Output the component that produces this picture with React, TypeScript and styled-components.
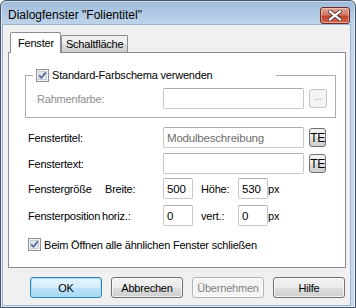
import styled, { createGlobalStyle } from 'styled-components';

const GlobalStyle = createGlobalStyle`
  html, body {
    margin: 0;
    padding: 0;
    background: #ffffff;
  }
  body {
    font-family: "Liberation Sans", Arial, sans-serif;
    font-size: 11px;
    letter-spacing: -0.2px;
    color: #000;
  }
`;

const CheckBox = () => (
  <CheckBoxBox>
    <svg width="13" height="13" viewBox="0 0 13 13">
      <rect x="0.5" y="0.5" width="12" height="12" fill="#f4f4f4" stroke="#8e8f8f" />
      <rect x="2.5" y="2.5" width="8" height="8" fill="#e4e7ec" stroke="#c6cbd3" />
      <path d="M3.2 6.4 L5.4 8.8 L9.8 3.4" fill="none" stroke="#55679a" strokeWidth="1.7" />
    </svg>
  </CheckBoxBox>
);

const CloseGlyph = () => (
  <svg width="14" height="11" viewBox="0 0 14 11">
    <path d="M2 1.5 L12 9.5 M12 1.5 L2 9.5" stroke="#5a3a3a" strokeWidth="4" strokeLinecap="square" />
    <path d="M2 1.5 L12 9.5 M12 1.5 L2 9.5" stroke="#ffffff" strokeWidth="2.2" strokeLinecap="square" />
  </svg>
);

const App = () => {
  return (
    <>
      <GlobalStyle />
      <Window>
        <TitleBar>
          <Title>Dialogfenster "Folientitel"</Title>
          <CloseButton>
            <CloseGlyph />
          </CloseButton>
        </TitleBar>
        <Client>
          <TabStrip>
            <Tab $active>Fenster</Tab>
            <Tab>Schaltfläche</Tab>
          </TabStrip>
          <Panel>
            <GroupBox>
              <GroupLegend>
                <CheckBox />
                <span>Standard-Farbschema verwenden</span>
              </GroupLegend>
              <Row $pl={11}>
                <Label $w={126} $disabled>Rahmenfarbe:</Label>
                <TextBox $w={141} />
                <SmallButton $disabled>...</SmallButton>
              </Row>
            </GroupBox>

            <Row $pl={19} $mt={9}>
              <Label $w={135}>Fenstertitel:</Label>
              <TextBox $w={141} $muted>Modulbeschreibung</TextBox>
              <SmallButton>TE</SmallButton>
            </Row>
            <Row $pl={19} $mt={5}>
              <Label $w={135}>Fenstertext:</Label>
              <TextBox $w={141} />
              <SmallButton>TE</SmallButton>
            </Row>
            <Row $pl={19} $mt={4}>
              <Label $w={77}>Fenstergröße</Label>
              <Label $w={58}>Breite:</Label>
              <TextBox $w={30}>500</TextBox>
              <Label $w={37} $ml={8}>Höhe:</Label>
              <TextBox $w={30}>530</TextBox>
              <Label>px</Label>
            </Row>
            <Row $pl={19} $mt={6}>
              <Label $w={74}>Fensterposition</Label>
              <Label $w={61}>horiz.:</Label>
              <TextBox $w={30}>0</TextBox>
              <Label $w={37} $ml={8}>vert.:</Label>
              <TextBox $w={30}>0</TextBox>
              <Label>px</Label>
            </Row>
            <CheckRow>
              <CheckBox />
              <span>Beim Öffnen alle ähnlichen Fenster schließen</span>
            </CheckRow>
          </Panel>
          <ButtonBar>
            <DialogButton $default>OK</DialogButton>
            <DialogButton>Abbrechen</DialogButton>
            <DialogButton $disabled>Übernehmen</DialogButton>
            <DialogButton>Hilfe</DialogButton>
          </ButtonBar>
        </Client>
      </Window>
    </>
  );
};

export default App;

const Window = styled.div`
  box-sizing: border-box;
  width: 356px;
  height: 308px;
  display: flex;
  flex-direction: column;
  border: 1px solid #46566a;
  border-radius: 6px 6px 0 0;
  background: linear-gradient(to bottom, #9fbbd9 0px, #bfd5ec 24px, #c4d9ef 60px, #c4d9ef 100%);
  box-shadow: inset 0 0 0 1px rgba(255, 255, 255, 0.45);
  overflow: hidden;
`;

const TitleBar = styled.div`
  height: 24px;
  flex-shrink: 0;
  display: flex;
  align-items: center;
  justify-content: space-between;
  padding: 0 5px 0 7px;
`;

const Title = styled.div`
  font-size: 12px;
  letter-spacing: 0;
  color: #000;
  margin-top: 3px;
`;

const CloseButton = styled.div`
  box-sizing: border-box;
  width: 30px;
  height: 17px;
  margin-top: 5px;
  display: flex;
  align-items: center;
  justify-content: center;
  border: 1px solid #6a2a2a;
  border-radius: 3px;
  background: linear-gradient(to bottom, #e2a394 0%, #d07a66 45%, #c0432c 55%, #cf6a4e 100%);
  box-shadow: inset 0 0 0 1px rgba(255, 220, 210, 0.5);
`;

const Client = styled.div`
  flex: 1;
  margin: 0 5px 2px 2px;
  background: #f0f0f0;
  display: flex;
  flex-direction: column;
  box-shadow: 0 0 0 1px rgba(120, 140, 165, 0.45);
`;

const TabStrip = styled.div`
  display: flex;
  align-items: flex-end;
  height: 20px;
  margin: 7px 4px 0 7px;
`;

const Tab = styled.div<{ $active?: boolean }>`
  box-sizing: border-box;
  position: relative;
  z-index: ${({ $active }) => ($active ? 1 : 0)};
  height: ${({ $active }) => ($active ? '21px' : '17px')};
  margin-bottom: ${({ $active }) => ($active ? '-1px' : '0')};
  padding: ${({ $active }) => ($active ? '3px 6px 0 7px' : '1px 4px 0 4px')};
  border: 1px solid #898c95;
  border-bottom: none;
  border-radius: 2px 2px 0 0;
  background: ${({ $active }) => ($active ? '#ffffff' : 'linear-gradient(to bottom, #f3f3f3 0%, #ebebeb 50%, #dddddd 51%, #cfcfcf 100%)')};
  line-height: 14px;
  white-space: nowrap;
`;

const Panel = styled.div`
  box-sizing: border-box;
  height: 216px;
  margin: 0 4px 0 5px;
  border: 1px solid #898c95;
  background: #ffffff;
  display: flex;
  flex-direction: column;
`;

const GroupBox = styled.fieldset`
  margin: 16px 9px 0 16px;
  padding: 6px 0 8px 0;
  border: 1px solid #adadad;
  min-width: 0;
`;

const GroupLegend = styled.legend`
  box-sizing: border-box;
  width: 243px;
  height: 13px;
  margin-left: 7px;
  padding: 0 0 0 3px;
  display: flex;
  align-items: center;
  gap: 3px;
  line-height: 13px;
`;

const Row = styled.div<{ $pl?: number; $mt?: number }>`
  display: flex;
  align-items: center;
  height: 21px;
  padding-left: ${({ $pl }) => $pl ?? 0}px;
  margin-top: ${({ $mt }) => $mt ?? 0}px;
`;

const Label = styled.span<{ $w?: number; $ml?: number; $disabled?: boolean }>`
  flex-shrink: 0;
  width: ${({ $w }) => ($w ? `${$w}px` : 'auto')};
  margin-left: ${({ $ml }) => $ml ?? 0}px;
  color: ${({ $disabled }) => ($disabled ? '#8d8d8d' : '#000')};
  white-space: nowrap;
`;

const TextBox = styled.div<{ $w: number; $muted?: boolean }>`
  box-sizing: border-box;
  flex-shrink: 0;
  width: ${({ $w }) => $w}px;
  height: 21px;
  padding: 0 3px;
  display: flex;
  align-items: center;
  border: 1px solid #c4c7cc;
  border-top-color: #abadb3;
  border-radius: 2px;
  background: #ffffff;
  color: ${({ $muted }) => ($muted ? '#6d6d6d' : '#000')};
  font-size: 11.5px;
  white-space: nowrap;
  overflow: hidden;
`;

const SmallButton = styled.div<{ $disabled?: boolean }>`
  box-sizing: border-box;
  width: ${({ $disabled }) => ($disabled ? '18px' : '17px')};
  height: 19px;
  margin-left: 5px;
  display: flex;
  align-items: center;
  justify-content: center;
  border: 1px solid ${({ $disabled }) => ($disabled ? '#c1c4c7' : '#707070')};
  border-radius: 3px;
  background: ${({ $disabled }) =>
    $disabled ? '#f4f4f4' : 'linear-gradient(to bottom, #f2f2f2 0%, #ebebeb 50%, #dddddd 51%, #cfcfcf 100%)'};
  color: ${({ $disabled }) => ($disabled ? '#a0a0a0' : '#000')};
  font-size: ${({ $disabled }) => ($disabled ? '10px' : '12px')};
  letter-spacing: -0.5px;
  line-height: 1;
  padding-bottom: ${({ $disabled }) => ($disabled ? '4px' : '0')};
`;

const CheckBoxBox = styled.span`
  display: inline-flex;
  width: 13px;
  height: 13px;
  flex-shrink: 0;
`;

const CheckRow = styled.div`
  display: flex;
  align-items: center;
  gap: 3px;
  height: 13px;
  margin-top: 12px;
  padding-left: 19px;
`;

const ButtonBar = styled.div`
  display: flex;
  justify-content: flex-end;
  gap: 9px;
  margin-top: 9px;
  padding-right: 5px;
`;

const DialogButton = styled.div<{ $default?: boolean; $disabled?: boolean }>`
  box-sizing: border-box;
  width: 72px;
  height: 21px;
  display: flex;
  align-items: center;
  justify-content: center;
  border: 1px solid ${({ $default, $disabled }) => ($default ? '#3c7fb1' : $disabled ? '#adb2b5' : '#707070')};
  border-radius: 3px;
  background: ${({ $default, $disabled }) =>
    $default
      ? 'linear-gradient(to bottom, #e5f4fc 0%, #d4edfb 50%, #bde3f8 51%, #a7d9f5 100%)'
      : $disabled
        ? '#f4f4f4'
        : 'linear-gradient(to bottom, #f2f2f2 0%, #ebebeb 50%, #dddddd 51%, #cfcfcf 100%)'};
  box-shadow: ${({ $default }) => ($default ? 'inset 0 0 0 1px #9fe1fb' : 'inset 0 0 0 1px rgba(255,255,255,0.7)')};
  color: ${({ $disabled }) => ($disabled ? '#838383' : '#000')};
  font-weight: normal;
`;
